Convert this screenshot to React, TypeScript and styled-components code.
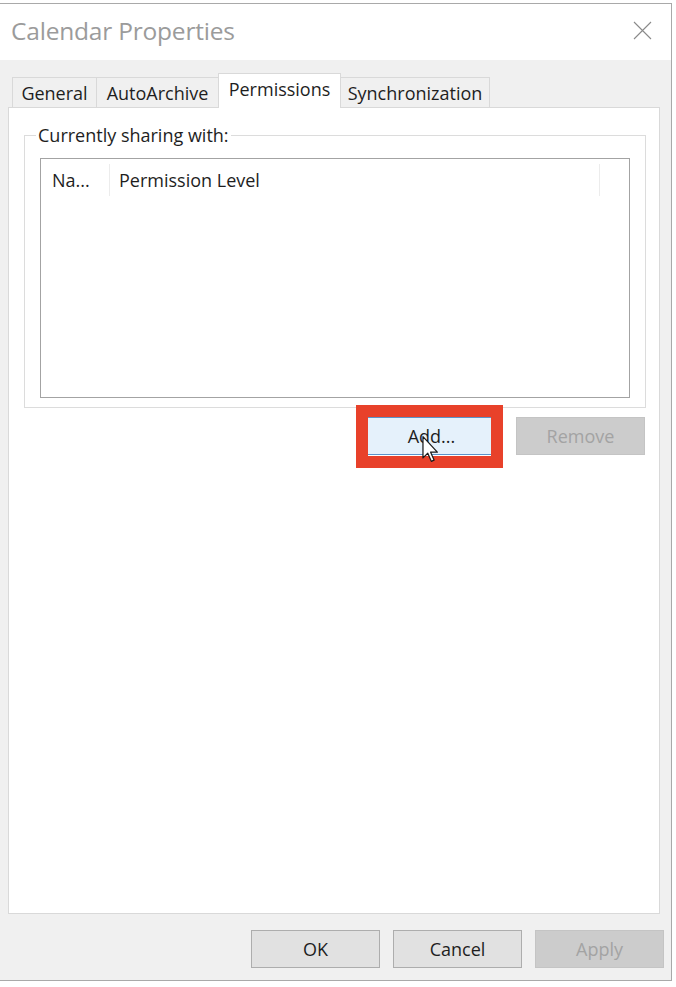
import React from "react";
import styled, { createGlobalStyle } from "styled-components";

const Global = createGlobalStyle`
  html, body { margin: 0; padding: 0; background: #ffffff; }
  body { font-family: "Open Sans", "Noto Sans", sans-serif; }
  * { box-sizing: border-box; }
`;

const Window = styled.div`
  margin-top: 3px;
  width: 672px;
  height: 978px;
  border: 1px solid #a9a9a9;
  border-left: none;
  display: flex;
  flex-direction: column;
  background: #f0f0f0;
`;

const TitleBar = styled.div`
  height: 56px;
  background: #ffffff;
  display: flex;
  align-items: center;
  justify-content: space-between;
  padding: 0 19px 4px 11px;
`;

const Title = styled.div`
  font-size: 24.5px;
  color: #9b9b9b;
  letter-spacing: -0.2px;
`;

const Body = styled.div`
  flex: 1;
  display: flex;
  flex-direction: column;
  padding-top: 13px;
`;

const TabStrip = styled.div`
  display: flex;
  align-items: flex-end;
  height: 35px;
  padding-left: 12px;
  margin-bottom: -1px;
  position: relative;
  z-index: 1;
`;

const Tab = styled.div<{ $w: number; $active?: boolean }>`
  width: ${(p) => p.$w}px;
  height: ${(p) => (p.$active ? 35 : 31)}px;
  margin-left: -1px;
  display: flex;
  align-items: ${(p) => (p.$active ? "flex-start" : "center")};
  justify-content: center;
  padding-top: ${(p) => (p.$active ? 3 : 1)}px;
  font-size: 18px;
  color: #1e1e1e;
  background: ${(p) => (p.$active ? "#ffffff" : "#f0f0f0")};
  border: 1px solid #d9d9d9;
  border-bottom: ${(p) => (p.$active ? "none" : "1px solid #d9d9d9")};
  &:first-child { margin-left: 0; }
`;

const Panel = styled.div`
  margin-left: 8px;
  width: 652px;
  height: 807px;
  background: #ffffff;
  border: 1px solid #d9d9d9;
  display: flex;
  flex-direction: column;
  padding: 0 13px 0 15px;
`;

const GroupBox = styled.fieldset`
  margin: 15px 0 0 0;
  padding: 0 15px 9px 15px;
  border: 1px solid #dcdcdc;
  min-width: 0;
`;

const Legend = styled.legend`
  padding: 0 2px;
  margin-left: -4px;
  font-size: 18px;
  line-height: 24px;
  color: #1e1e1e;
`;

const ListView = styled.div`
  margin-top: 11px;
  height: 240px;
  border: 1px solid #a3a3a3;
  background: #ffffff;
`;

const HeaderRow = styled.div`
  display: flex;
  height: 38px;
  padding-top: 5px;
`;

const HeaderCell = styled.div<{ $w?: number; $pad: number; $sep?: boolean }>`
  ${(p) => (p.$w ? `width: ${p.$w}px;` : "flex: 1;")}
  height: 32px;
  padding-left: ${(p) => p.$pad}px;
  display: flex;
  align-items: center;
  font-size: 18px;
  color: #1e1e1e;
  white-space: nowrap;
  border-right: ${(p) => (p.$sep ? "1px solid #ececec" : "none")};
`;

const ButtonRow = styled.div`
  display: flex;
  justify-content: flex-end;
  gap: 20px;
  margin-top: 9px;
  margin-right: 1px;
`;

const Btn = styled.button<{ $disabled?: boolean; $hover?: boolean }>`
  width: 129px;
  height: 38px;
  font-family: "Open Sans", "Noto Sans", sans-serif;
  font-size: 18px;
  padding: 0;
  color: ${(p) => (p.$disabled ? "#a3a3a3" : "#1e1e1e")};
  background: ${(p) => (p.$disabled ? "#cccccc" : p.$hover ? "#e5f1fb" : "#e1e1e1")};
  border: 1px solid ${(p) => (p.$disabled ? "#c4c4c4" : p.$hover ? "#5b93c9" : "#adadad")};
  position: relative;
  cursor: default;
`;

const Highlight = styled.div`
  position: absolute;
  left: -12px;
  top: -13px;
  width: 147px;
  height: 63px;
  border: 12px solid #e8412a;
  pointer-events: none;
`;

const Cursor = styled.svg`
  position: absolute;
  left: 54px;
  top: 18px;
`;

const Footer = styled.div`
  display: flex;
  justify-content: flex-end;
  gap: 13px;
  margin-top: 16px;
  padding-right: 7px;
`;

const CloseIcon = () => (
  <svg width="19" height="19" viewBox="0 0 19 19">
    <path d="M1 1 L18 18 M18 1 L1 18" stroke="#8a8a8a" strokeWidth="1.1" fill="none" />
  </svg>
);

export default function App() {
  return (
    <>
      <Global />
      <Window>
        <TitleBar>
          <Title>Calendar Properties</Title>
          <CloseIcon />
        </TitleBar>
        <Body>
          <TabStrip>
            <Tab $w={85}>General</Tab>
            <Tab $w={123}>AutoArchive</Tab>
            <Tab $w={123} $active>Permissions</Tab>
            <Tab $w={150}>Synchronization</Tab>
          </TabStrip>
          <Panel>
            <GroupBox>
              <Legend>Currently sharing with:</Legend>
              <ListView>
                <HeaderRow>
                  <HeaderCell $w={69} $pad={11} $sep>Na...</HeaderCell>
                  <HeaderCell $w={490} $pad={9} $sep>Permission Level</HeaderCell>
                  <HeaderCell $pad={0} />
                </HeaderRow>
              </ListView>
            </GroupBox>
            <ButtonRow>
              <Btn $hover>
                Add...
                <Highlight />
                <Cursor width="17" height="26" viewBox="0 0 12 19">
                  <path
                    d="M0.5 0.5 L0.5 16 L4 12.6 L6.6 18.5 L8.6 17.6 L6.1 11.8 L11 11.8 Z"
                    fill="#ffffff"
                    stroke="#1a1a1a"
                    strokeWidth="0.9"
                    strokeLinejoin="round"
                  />
                </Cursor>
              </Btn>
              <Btn $disabled>Remove</Btn>
            </ButtonRow>
          </Panel>
          <Footer>
            <Btn>OK</Btn>
            <Btn>Cancel</Btn>
            <Btn $disabled>Apply</Btn>
          </Footer>
        </Body>
      </Window>
    </>
  );
}
